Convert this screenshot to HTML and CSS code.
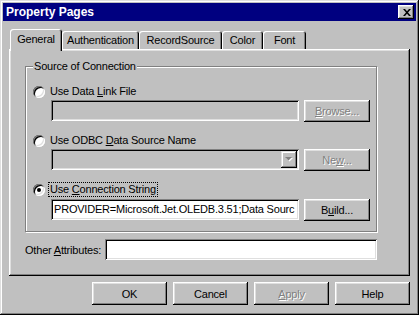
FILE: index.html
```html
<!DOCTYPE html>
<html lang="en">
<head>
    <meta charset="UTF-8">
    <title>Property Pages</title>
    <link rel="stylesheet" href="styles.css">
</head>
<body>
    <div class="window">
        <div class="titlebar">
            <span class="title">Property Pages</span>
            <span class="close-btn">
                <svg width="8" height="7" viewBox="0 0 8 7"><path d="M0 0h2l2 2.3L6 0h2L5 3.5 8 7H6L4 4.7 2 7H0l3-3.5z" fill="#000"/></svg>
            </span>
        </div>

        <div class="tabs">
            <div class="tab active" style="width:52px">General</div>
            <div class="tab" style="width:77px">Authentication</div>
            <div class="tab" style="width:83px">RecordSource</div>
            <div class="tab" style="width:41px">Color</div>
            <div class="tab" style="width:43px">Font</div>
        </div>

        <div class="panel">
            <div class="group">
                <span class="legend">Source of Connection</span>

                <div class="option">
                    <span class="radio"></span>
                    <span class="option-label">Use Data <u>L</u>ink File</span>
                </div>
                <div class="field-row">
                    <div class="field disabled"></div>
                    <div class="btn small disabled"><span><u>B</u>rowse...</span></div>
                </div>

                <div class="option">
                    <span class="radio"></span>
                    <span class="option-label">Use ODBC <u>D</u>ata Source Name</span>
                </div>
                <div class="field-row">
                    <div class="field disabled combo">
                        <span class="combo-arrow">
                            <svg width="8" height="5" viewBox="0 0 8 5"><path d="M1 1h7l-3.5 3.5z" fill="#fff"/><path d="M0 0h7L3.5 3.5z" fill="#808080"/></svg>
                        </span>
                    </div>
                    <div class="btn small disabled"><span>Ne<u>w</u>...</span></div>
                </div>

                <div class="option focused">
                    <span class="radio checked"></span>
                    <span class="option-label">Use <u>C</u>onnection String</span>
                </div>
                <div class="field-row">
                    <div class="field">PROVIDER=Microsoft.Jet.OLEDB.3.51;Data Sourc</div>
                    <div class="btn small"><span>B<u>u</u>ild...</span></div>
                </div>
            </div>

            <div class="attr-row">
                <span class="attr-label">Other <u>A</u>ttributes:</span>
                <div class="field attr-field"></div>
            </div>
        </div>

        <div class="buttons">
            <div class="btn"><span>OK</span></div>
            <div class="btn"><span>Cancel</span></div>
            <div class="btn disabled"><span><u>A</u>pply</span></div>
            <div class="btn"><span>Help</span></div>
        </div>
    </div>
</body>
</html>
```

FILE: styles.css
```css
body {
    margin: 0;
    font-family: "Liberation Sans", Arial, sans-serif;
    font-size: 11px;
    letter-spacing: -0.2px;
    color: #000;
    background: #c0c0c0;
}
u {
    text-decoration-thickness: 1px;
    text-underline-offset: 1px;
}
.window {
    width: 419px;
    height: 315px;
    box-sizing: border-box;
    padding: 3px;
    background: #c0c0c0;
    box-shadow: inset -1px -1px #000, inset 1px 1px #dfdfdf, inset -2px -2px #808080, inset 2px 2px #fff;
}
/* Title bar */
.titlebar {
    height: 18px;
    background: #000080;
    display: flex;
    align-items: center;
    justify-content: space-between;
    padding: 0 2px 0 3px;
}
.title {
    color: #fff;
    font-weight: bold;
    font-size: 12px;
    letter-spacing: 0;
}
.close-btn {
    width: 16px;
    height: 14px;
    box-sizing: border-box;
    display: flex;
    align-items: center;
    justify-content: center;
    padding-left: 1px;
    background: #c0c0c0;
    box-shadow: inset -1px -1px #000, inset 1px 1px #fff, inset -2px -2px #808080, inset 2px 2px #dfdfdf;
}
.close-btn svg {
    display: block;
}
/* Tabs */
.tabs {
    display: flex;
    align-items: flex-end;
    height: 20px;
    margin: 8px 0 0 7px;
}
.tab {
    height: 18px;
    box-sizing: border-box;
    display: flex;
    align-items: center;
    justify-content: center;
    padding-bottom: 1px;
    border-radius: 3px 3px 0 0;
    background: #c0c0c0;
    box-shadow: inset 1px 1px #fff, inset -1px 0 #000, inset -2px 0 #808080;
}
.tab.active {
    height: 22px;
    margin-bottom: -2px;
    padding-bottom: 3px;
    position: relative;
    z-index: 1;
}
/* Panel */
.panel {
    width: 401px;
    height: 227px;
    box-sizing: border-box;
    margin-left: 6px;
    padding: 17px 0 0 16px;
    box-shadow: inset -1px -1px #000, inset 1px 1px #fff, inset -2px -2px #808080, inset 2px 2px #dfdfdf;
}
.group {
    width: 352px;
    box-sizing: border-box;
    border: 1px solid #808080;
    box-shadow: inset 1px 1px #fff, 1px 1px #fff;
    padding: 0 6px 10px 7px;
}
.legend {
    display: block;
    width: fit-content;
    height: 13px;
    line-height: 13px;
    margin: -7px 0 0 0;
    padding: 0 1px;
    background: #c0c0c0;
}
.option {
    display: flex;
    align-items: center;
    height: 13px;
    margin-top: 12px;
}
.option.focused {
    margin-top: 11px;
    height: 15px;
}
.radio {
    width: 12px;
    height: 12px;
    border-radius: 50%;
    background: #fff;
    box-shadow: inset 1px 1px #808080, inset -1px -1px #fff, inset 2px 2px #000, inset -2px -2px #dfdfdf;
    display: flex;
    align-items: center;
    justify-content: center;
}
.radio.checked::after {
    content: "";
    width: 4px;
    height: 4px;
    border-radius: 50%;
    background: #000;
}
.option-label {
    margin-left: 4px;
    padding: 0 1px;
    line-height: 13px;
}
.focused .option-label {
    outline: 1px dotted #000;
}
.field-row {
    display: flex;
    align-items: flex-start;
    margin: 2px 0 0 18px;
    height: 22px;
}
.field {
    width: 248px;
    height: 21px;
    box-sizing: border-box;
    background: #fff;
    padding: 0 3px;
    line-height: 21px;
    white-space: nowrap;
    overflow: hidden;
    box-shadow: inset 1px 1px #808080, inset -1px -1px #fff, inset 2px 2px #000, inset -2px -2px #dfdfdf;
}
.field.disabled {
    background: #c0c0c0;
}
.combo {
    display: flex;
    justify-content: flex-end;
    padding: 2px;
}
.combo-arrow {
    width: 16px;
    height: 17px;
    box-sizing: border-box;
    display: flex;
    align-items: center;
    justify-content: center;
    box-shadow: inset -1px -1px #000, inset 1px 1px #dfdfdf, inset -2px -2px #808080, inset 2px 2px #fff;
}
.combo-arrow svg {
    display: block;
}
.btn {
    width: 75px;
    height: 23px;
    box-sizing: border-box;
    display: flex;
    align-items: center;
    justify-content: center;
    background: #c0c0c0;
    box-shadow: inset -1px -1px #000, inset 1px 1px #fff, inset -2px -2px #808080, inset 2px 2px #dfdfdf;
}
.btn.small {
    width: 66px;
    height: 22px;
    margin-left: 5px;
}
.btn.disabled {
    color: #808080;
    text-shadow: 1px 1px #fff;
}
/* Other attributes */
.attr-row {
    display: flex;
    align-items: center;
    margin-top: 7px;
}
.attr-label {
    width: 80px;
}
.attr-field {
    width: 272px;
}
/* Bottom buttons */
.buttons {
    display: flex;
    justify-content: flex-end;
    gap: 6px;
    width: 407px;
    margin-top: 6px;
}
```
